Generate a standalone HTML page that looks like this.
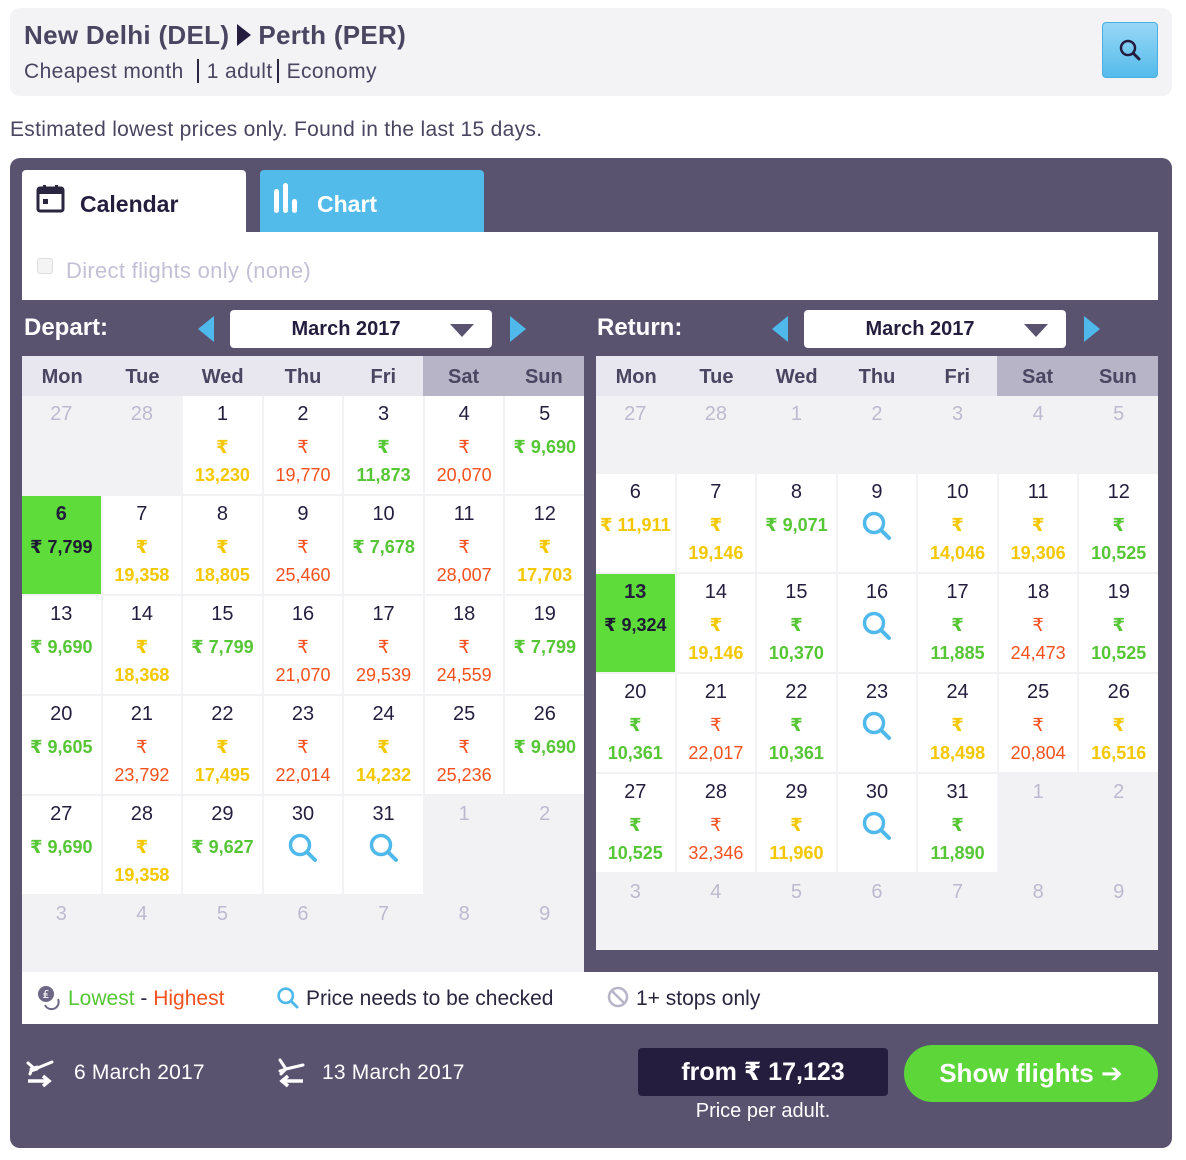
<!DOCTYPE html>
<html><head><meta charset="utf-8">
<style>
*{box-sizing:border-box;margin:0;padding:0}
body{width:1186px;height:1160px;background:#fff;font-family:"Liberation Sans","DejaVu Sans",sans-serif;position:relative;overflow:hidden;color:#2b2640}
.abs{position:absolute}
.top{left:10px;top:8px;width:1162px;height:88px;background:#f3f3f6;border-radius:10px}
.title{left:24px;top:20px;font-size:26px;font-weight:bold;color:#4a4560;white-space:nowrap;letter-spacing:0.3px}
.sub{left:24px;top:59px;font-size:21px;color:#4a4560;white-space:nowrap;letter-spacing:0.4px}
.sub span.bar{display:inline-block;width:2px;height:24px;background:#2b2640;vertical-align:-5px;margin:0 8px 0 13px}
.btn{left:1102px;top:22px;width:56px;height:56px;border-radius:4px;background:linear-gradient(#97d7f6,#55bbeb);border:1px solid #4aaee0}
.est{left:10px;top:118px;font-size:21px;color:#4a4560;white-space:nowrap;letter-spacing:0.3px}
.panel{left:10px;top:158px;width:1162px;height:990px;background:#5a5370;border-radius:10px}
.tab1{left:22px;top:170px;width:224px;height:64px;background:#fff;border-radius:4px 4px 0 0}
.tab2{left:260px;top:170px;width:224px;height:62px;background:#52bbe9;border-radius:4px 4px 0 0}
.tabt{font-size:23px;font-weight:bold;top:191px}
.wbar{left:22px;top:232px;width:1136px;height:68px;background:#fff}
.cb{left:37px;top:258px;width:16px;height:16px;border:1px solid #ddd;border-radius:3px;background:#f4f4f4}
.dir{left:66px;top:258px;font-size:22px;color:#c3c0d6;letter-spacing:0.3px}
.lab{top:314px;font-size:24px;font-weight:bold;color:#fff}
.sel{top:310px;width:262px;height:38px;background:#fff;border-radius:4px;font-size:20px;font-weight:bold;color:#241d3d;text-align:center;line-height:39px;padding-right:30px}
.sel i{position:absolute;right:18px;top:14px;width:0;height:0;border-left:12px solid transparent;border-right:12px solid transparent;border-top:13px solid #5a5370}
.la{top:316px;width:0;height:0;border-top:13px solid transparent;border-bottom:13px solid transparent;border-right:16px solid #4fb9ec}
.ra{top:316px;width:0;height:0;border-top:13px solid transparent;border-bottom:13px solid transparent;border-left:16px solid #4fb9ec}
.hdr{top:356px;height:40px;display:grid;grid-template-columns:repeat(7,1fr);background:#e8e7f0}
.hdr div{text-align:center;font-size:20px;font-weight:bold;color:#4a4560;line-height:42px}
.hdr .we{background:#b7b4c7}
.grid{top:396px;display:grid;grid-template-columns:repeat(7,1fr);gap:2px;background:#f2f2f5}
.grid>div{text-align:center;padding-top:7px}
.c{background:#fff}
.n{font-size:20px;line-height:22px;color:#241d3d}
.g .n{color:#bdbad0}
.p{margin-top:8px;font-size:18px;line-height:28px;font-weight:bold;white-space:nowrap}
.G{color:#57c636}.Y{color:#f3c800}.O{color:#f4511e;font-weight:normal}
.s{background:#5ddc3a}.s .n{font-weight:bold}.s .p{color:#1f1a33}
.q{margin-top:7px}
.leg{left:22px;top:972px;width:1136px;height:52px;background:#fff}
.lt{top:987px;font-size:21px;white-space:nowrap}
.bt{top:1061px;font-size:21px;color:#fff;white-space:nowrap;letter-spacing:0.2px}
.price{left:638px;top:1048px;width:250px;height:48px;background:#241d3d;border-radius:4px;color:#fff;font-size:25px;font-weight:bold;text-align:center;line-height:48px}
.ppa{left:638px;top:1100px;width:250px;text-align:center;color:#fff;font-size:20px}
.show{left:904px;top:1045px;width:254px;height:57px;background:#5dd63a;border-radius:29px;color:#fff;font-size:26px;font-weight:bold;text-align:center;line-height:56px}
</style></head><body>
<div class="abs top"></div>
<div class="abs title">New Delhi (DEL) <svg width="18" height="24" viewBox="0 0 18 24" style="vertical-align:-3px;margin:0 -2px"><path d="M2 1 L16 12 L2 23 Z" fill="#241d3d"/></svg> Perth (PER)</div>
<div class="abs sub">Cheapest month<span class="bar"></span>1 adult<span class="bar" style="margin-left:4px"></span>Economy</div>
<div class="abs btn"><svg width="56" height="56" viewBox="0 0 56 56" style="position:absolute;left:-1px;top:-1px"><circle cx="26" cy="26" r="7" fill="none" stroke="#241d3d" stroke-width="2.5"/><path d="M31 31 L37 37" stroke="#241d3d" stroke-width="3" stroke-linecap="round"/></svg></div>
<div class="abs est">Estimated lowest prices only. Found in the last 15 days.</div>

<div class="abs panel"></div>
<div class="abs tab1"></div>
<div class="abs tab2"></div>
<svg class="abs" style="left:36px;top:184px" width="30" height="30" viewBox="0 0 30 30"><rect x="2" y="4" width="25" height="23" rx="2" fill="none" stroke="#2b2640" stroke-width="3"/><rect x="2" y="4" width="25" height="6" fill="#2b2640"/><rect x="7" y="1" width="3" height="4" fill="#2b2640"/><rect x="19" y="1" width="3" height="4" fill="#2b2640"/><rect x="7" y="15" width="5" height="5" fill="#2b2640"/></svg>
<div class="abs tabt" style="left:80px;color:#241d3d">Calendar</div>
<svg class="abs" style="left:273px;top:183px" width="30" height="32" viewBox="0 0 30 32"><rect x="1" y="6" width="5" height="24" rx="2.5" fill="#fff"/><rect x="10" y="0" width="5" height="30" rx="2.5" fill="#fff"/><rect x="19" y="16" width="5" height="14" rx="2.5" fill="#fff"/></svg>
<div class="abs tabt" style="left:317px;color:#fff">Chart</div>
<div class="abs wbar"></div>
<div class="abs cb"></div>
<div class="abs dir">Direct flights only (none)</div>

<div class="abs lab" style="left:24px">Depart:</div>
<div class="abs la" style="left:198px"></div>
<div class="abs sel" style="left:230px">March 2017<i></i></div>
<div class="abs ra" style="left:510px"></div>
<div class="abs lab" style="left:597px">Return:</div>
<div class="abs la" style="left:772px"></div>
<div class="abs sel" style="left:804px">March 2017<i></i></div>
<div class="abs ra" style="left:1084px"></div>

<div class="abs hdr" style="left:22px;width:562px"><div>Mon</div><div>Tue</div><div>Wed</div><div>Thu</div><div>Fri</div><div class="we">Sat</div><div class="we">Sun</div></div>
<div class="abs hdr" style="left:596px;width:562px"><div>Mon</div><div>Tue</div><div>Wed</div><div>Thu</div><div>Fri</div><div class="we">Sat</div><div class="we">Sun</div></div>

<svg width="0" height="0" style="position:absolute"><defs><symbol id="mg" viewBox="0 0 32 32"><circle cx="13" cy="13" r="9.5" fill="none" stroke="#4fb9ec" stroke-width="3.5"/><path d="M20 20 L28 28" stroke="#4fb9ec" stroke-width="4" stroke-linecap="round"/></symbol></defs></svg>

<div class="abs grid" style="left:22px;width:562px;height:576px;grid-template-rows:98px 98px 98px 98px 98px 76px">
<div class="g"><div class="n">27</div></div><div class="g"><div class="n">28</div></div>
<div class="c"><div class="n">1</div><div class="p Y">₹<br>13,230</div></div>
<div class="c"><div class="n">2</div><div class="p O">₹<br>19,770</div></div>
<div class="c"><div class="n">3</div><div class="p G">₹<br>11,873</div></div>
<div class="c"><div class="n">4</div><div class="p O">₹<br>20,070</div></div>
<div class="c"><div class="n">5</div><div class="p G">₹ 9,690</div></div>

<div class="s"><div class="n">6</div><div class="p">₹ 7,799</div></div>
<div class="c"><div class="n">7</div><div class="p Y">₹<br>19,358</div></div>
<div class="c"><div class="n">8</div><div class="p Y">₹<br>18,805</div></div>
<div class="c"><div class="n">9</div><div class="p O">₹<br>25,460</div></div>
<div class="c"><div class="n">10</div><div class="p G">₹ 7,678</div></div>
<div class="c"><div class="n">11</div><div class="p O">₹<br>28,007</div></div>
<div class="c"><div class="n">12</div><div class="p Y">₹<br>17,703</div></div>

<div class="c"><div class="n">13</div><div class="p G">₹ 9,690</div></div>
<div class="c"><div class="n">14</div><div class="p Y">₹<br>18,368</div></div>
<div class="c"><div class="n">15</div><div class="p G">₹ 7,799</div></div>
<div class="c"><div class="n">16</div><div class="p O">₹<br>21,070</div></div>
<div class="c"><div class="n">17</div><div class="p O">₹<br>29,539</div></div>
<div class="c"><div class="n">18</div><div class="p O">₹<br>24,559</div></div>
<div class="c"><div class="n">19</div><div class="p G">₹ 7,799</div></div>

<div class="c"><div class="n">20</div><div class="p G">₹ 9,605</div></div>
<div class="c"><div class="n">21</div><div class="p O">₹<br>23,792</div></div>
<div class="c"><div class="n">22</div><div class="p Y">₹<br>17,495</div></div>
<div class="c"><div class="n">23</div><div class="p O">₹<br>22,014</div></div>
<div class="c"><div class="n">24</div><div class="p Y">₹<br>14,232</div></div>
<div class="c"><div class="n">25</div><div class="p O">₹<br>25,236</div></div>
<div class="c"><div class="n">26</div><div class="p G">₹ 9,690</div></div>

<div class="c"><div class="n">27</div><div class="p G">₹ 9,690</div></div>
<div class="c"><div class="n">28</div><div class="p Y">₹<br>19,358</div></div>
<div class="c"><div class="n">29</div><div class="p G">₹ 9,627</div></div>
<div class="c"><div class="n">30</div><svg class="q" width="32" height="32"><use href="#mg"/></svg></div>
<div class="c"><div class="n">31</div><svg class="q" width="32" height="32"><use href="#mg"/></svg></div>
<div class="g"><div class="n">1</div></div><div class="g"><div class="n">2</div></div>

<div class="g"><div class="n">3</div></div><div class="g"><div class="n">4</div></div><div class="g"><div class="n">5</div></div><div class="g"><div class="n">6</div></div><div class="g"><div class="n">7</div></div><div class="g"><div class="n">8</div></div><div class="g"><div class="n">9</div></div>
</div>

<div class="abs grid" style="left:596px;width:562px;height:554px;grid-template-rows:76px 98px 98px 98px 98px 76px">
<div class="g"><div class="n">27</div></div><div class="g"><div class="n">28</div></div><div class="g"><div class="n">1</div></div><div class="g"><div class="n">2</div></div><div class="g"><div class="n">3</div></div><div class="g"><div class="n">4</div></div><div class="g"><div class="n">5</div></div>

<div class="c"><div class="n">6</div><div class="p Y">₹ 11,911</div></div>
<div class="c"><div class="n">7</div><div class="p Y">₹<br>19,146</div></div>
<div class="c"><div class="n">8</div><div class="p G">₹ 9,071</div></div>
<div class="c"><div class="n">9</div><svg class="q" width="32" height="32"><use href="#mg"/></svg></div>
<div class="c"><div class="n">10</div><div class="p Y">₹<br>14,046</div></div>
<div class="c"><div class="n">11</div><div class="p Y">₹<br>19,306</div></div>
<div class="c"><div class="n">12</div><div class="p G">₹<br>10,525</div></div>

<div class="s"><div class="n">13</div><div class="p">₹ 9,324</div></div>
<div class="c"><div class="n">14</div><div class="p Y">₹<br>19,146</div></div>
<div class="c"><div class="n">15</div><div class="p G">₹<br>10,370</div></div>
<div class="c"><div class="n">16</div><svg class="q" width="32" height="32"><use href="#mg"/></svg></div>
<div class="c"><div class="n">17</div><div class="p G">₹<br>11,885</div></div>
<div class="c"><div class="n">18</div><div class="p O">₹<br>24,473</div></div>
<div class="c"><div class="n">19</div><div class="p G">₹<br>10,525</div></div>

<div class="c"><div class="n">20</div><div class="p G">₹<br>10,361</div></div>
<div class="c"><div class="n">21</div><div class="p O">₹<br>22,017</div></div>
<div class="c"><div class="n">22</div><div class="p G">₹<br>10,361</div></div>
<div class="c"><div class="n">23</div><svg class="q" width="32" height="32"><use href="#mg"/></svg></div>
<div class="c"><div class="n">24</div><div class="p Y">₹<br>18,498</div></div>
<div class="c"><div class="n">25</div><div class="p O">₹<br>20,804</div></div>
<div class="c"><div class="n">26</div><div class="p Y">₹<br>16,516</div></div>

<div class="c"><div class="n">27</div><div class="p G">₹<br>10,525</div></div>
<div class="c"><div class="n">28</div><div class="p O">₹<br>32,346</div></div>
<div class="c"><div class="n">29</div><div class="p Y">₹<br>11,960</div></div>
<div class="c"><div class="n">30</div><svg class="q" width="32" height="32"><use href="#mg"/></svg></div>
<div class="c"><div class="n">31</div><div class="p G">₹<br>11,890</div></div>
<div class="g"><div class="n">1</div></div><div class="g"><div class="n">2</div></div>

<div class="g"><div class="n">3</div></div><div class="g"><div class="n">4</div></div><div class="g"><div class="n">5</div></div><div class="g"><div class="n">6</div></div><div class="g"><div class="n">7</div></div><div class="g"><div class="n">8</div></div><div class="g"><div class="n">9</div></div>
</div>

<div class="abs leg"></div>
<svg class="abs" style="left:37px;top:985px" width="26" height="26" viewBox="0 0 26 26"><circle cx="9" cy="9" r="8" fill="#6d6785"/><text x="9" y="13" font-size="11" fill="#fff" text-anchor="middle" font-family="DejaVu Sans">₤</text><path d="M8 20 A7 7 0 0 0 21 14" fill="none" stroke="#6d6785" stroke-width="2"/></svg>
<div class="abs lt" style="left:68px"><span style="color:#57c636">Lowest</span> - <span style="color:#f4511e">Highest</span></div>
<svg class="abs" style="left:276px;top:986px" width="24" height="24"><use href="#mg"/></svg>
<div class="abs lt" style="left:306px">Price needs to be checked</div>
<svg class="abs" style="left:607px;top:986px" width="24" height="24" viewBox="0 0 24 24"><circle cx="11" cy="11" r="9" fill="none" stroke="#b7b4c7" stroke-width="2.5"/><path d="M5 5 L17 17" stroke="#b7b4c7" stroke-width="2.5"/></svg>
<div class="abs lt" style="left:636px">1+ stops only</div>

<svg class="abs" style="left:25px;top:1057px" width="32" height="32" viewBox="0 0 32 32"><path d="M3 6 L10 12 L27 5 M6 12 L12 10 M12 12 L6 14 L5 17" stroke="#fff" stroke-width="3" fill="none" stroke-linecap="round"/><path d="M3 24 H24 M18 19 L24 24 L18 29" stroke="#fff" stroke-width="3.5" fill="none"/></svg>
<div class="abs bt" style="left:74px">6 March 2017</div>
<svg class="abs" style="left:274px;top:1057px" width="32" height="32" viewBox="0 0 32 32"><path d="M6 3 L12 12 L29 8 M6 14 L12 12 L7 17" stroke="#fff" stroke-width="3" fill="none" stroke-linecap="round"/><path d="M29 24 H8 M14 19 L8 24 L14 29" stroke="#fff" stroke-width="3.5" fill="none"/></svg>
<div class="abs bt" style="left:322px">13 March 2017</div>
<div class="abs price">from ₹ 17,123</div>
<div class="abs ppa">Price per adult.</div>
<div class="abs show">Show flights ➔</div>
</body></html>
